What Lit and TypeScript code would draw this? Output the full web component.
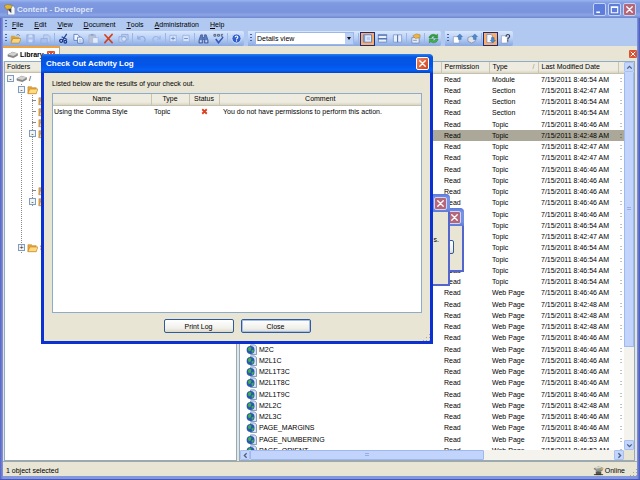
import { LitElement, html, svg, css, nothing, TemplateResult } from "lit";
import { customElement, property } from "lit/decorators.js";
import { classMap } from "lit/directives/class-map.js";

const shapes: Record<string, TemplateResult> = {
  app: svg`<path d="M5 2h5l2 2v8H4V5z" fill="#f4f6fa" stroke="#5a6c94" stroke-width=".7"/><path d="M0 2l4-1.500 5 1-1 3-5 1.500z" fill="#e9b62c" stroke="#7d6418" stroke-width=".5"/><path d="M4 6l4-1v5z" fill="#3c4454"/>`,
  open: svg`<path d="M1 3h4l1 1h4v6H1z" fill="#d9a43c"/><path d="M3 6h9l-2 5H1z" fill="#fbd477" stroke="#a8761c" stroke-width=".6"/><path d="M7 2.500c2-1.500 3-.5 3.500.5" fill="none" stroke="#4a5e8c" stroke-width=".8"/>`,
  save: svg`<path d="M2 2h8v8H2z" fill="#a9c0ec" stroke="#8ca6da" stroke-width=".8"/><path d="M4 2h4v3H4zM4 7h4v3H4z" fill="#cfdef8"/>`,
  saveAll: svg`<path d="M4 2h5l2 2v6H4z" fill="#bccff2" stroke="#94addf" stroke-width=".7"/><path d="M1 6h7v5H1z" fill="#a9c0ec" stroke="#8ca6da" stroke-width=".7"/>`,
  cut: svg`<path d="M9.500 1L5 8M4 4l6 3" stroke="#24438f" stroke-width="1.300"/><circle cx="3.500" cy="8.500" r="1.700" fill="none" stroke="#16358c" stroke-width="1.300"/><circle cx="8" cy="9.500" r="1.500" fill="none" stroke="#16358c" stroke-width="1.200"/>`,
  copy: svg`<path d="M1 1.500h4l2 2V8H1z" fill="#f2f7ff" stroke="#4468b4" stroke-width=".8"/><path d="M5 4.500h4l2 2V11H5z" fill="#f2f7ff" stroke="#4468b4" stroke-width=".8"/><path d="M6.500 7.500h3M6.500 9h3" stroke="#7593cf" stroke-width=".7"/>`,
  paste: svg`<path d="M1 2h7v9H1z" fill="#b9c3d8" stroke="#9aaccd" stroke-width=".7"/><path d="M3 1h3v2H3z" fill="#8fa3ca"/><path d="M5 5h6v6H5z" fill="#e2ebfb" stroke="#9db3dd" stroke-width=".7"/>`,
  remove: svg`<path d="M2 2l8 8.500M10 1.500L2 10.500" stroke="#d2401c" stroke-width="1.700" stroke-linecap="round"/>`,
  props: svg`<path d="M4 1.500h7v6H4z" fill="#b7cbef" stroke="#8ba4d6" stroke-width=".8"/><path d="M1 4h7v6H1z" fill="#bfd1f2" stroke="#8ba4d6" stroke-width=".8"/><circle cx="6.500" cy="6.500" r="2.500" fill="#d6e3fa" stroke="#8ba4d6" stroke-width=".8"/>`,
  undo: svg`<path d="M2 3v3.500h3.500M2.500 6c2-3 7-3 7.500 1 0 1-.5 2-1.500 2.500" fill="none" stroke="#8faae2" stroke-width="1.200"/>`,
  redo: svg`<path d="M10 3v3.500H6.500M9.500 6c-2-3-7-3-7.500 1 0 1 .5 2 1.500 2.500" fill="none" stroke="#9cb5e8" stroke-width="1.200"/>`,
  plus: svg`<path d="M2 2.500h7v7H2z" fill="#d5e3fb" stroke="#93abdc" stroke-width=".8"/><path d="M5.500 4v4M3.500 6h4" stroke="#6d8acb" stroke-width="1"/>`,
  minus: svg`<path d="M2 2.500h7v7H2z" fill="#d5e3fb" stroke="#93abdc" stroke-width=".8"/><path d="M3.500 6h4" stroke="#6d8acb" stroke-width="1"/>`,
  find: svg`<path d="M3 2h2v3h2V2h2l2 6v3H7V7H5v4H1V8z" fill="#5d7cc0" stroke="#2c4480" stroke-width=".6"/><path d="M2 8h2v2H2zM8 8h2v2H8z" fill="#cbdaf6"/>`,
  spell: svg`<path d="M1 1.500h2v2H1zM5 1.500h2v2H5zM11 1.500H9v2h2" fill="none" stroke="#34405c" stroke-width=".8"/><path d="M3 6.500l3 4 5-6" fill="none" stroke="#3158b4" stroke-width="1.700"/>`,
  help: svg`<circle cx="6" cy="6" r="5" fill="#2f5fcc" stroke="#dfe9fb" stroke-width="1"/><path d="M4.500 4.700c0-2 3-2 3 0 0 1-1.500 1-1.500 2.300M6 8v1.300" fill="none" stroke="#fff" stroke-width="1.200"/>`,
  viewA: svg`<path d="M1.500 2h9v8h-9z" fill="#e8f0fc" stroke="#4e70b6" stroke-width=".9"/><path d="M2 2h1.500v8H2z" fill="#7f9fdc"/><path d="M5 4h4v4H5z" fill="#b9cdf2"/>`,
  viewB: svg`<path d="M1.500 2h9v8h-9z" fill="#e8f0fc" stroke="#6684bf" stroke-width=".9"/><path d="M1 1.500h10V3H1zM1 5.500h10V7H1z" fill="#5474b4"/>`,
  viewC: svg`<path d="M1.500 2h9v8h-9z" fill="#e8f0fc" stroke="#7d97cb" stroke-width=".9"/><path d="M5.500 2h1.200v8H5.500z" fill="#5474b4"/>`,
  form: svg`<path d="M2 5h8v6H2z" fill="#e4ebf8" stroke="#6a7fae" stroke-width=".8"/><path d="M3 3l4-2 4 1v3L6 6z" fill="#edb544" stroke="#9c7426" stroke-width=".5"/><path d="M3.500 8h4" stroke="#6a7fae" stroke-width=".8"/>`,
  refresh: svg`<path d="M1 5.500C1.500 1 7 .5 9 2.500L10.500 1v4.500H6l1.500-1.500C6 3 4 3.500 3.500 5.500z" fill="#2fa336" stroke="#15701f" stroke-width=".4"/><path d="M11 6.500C10.500 11 5 11.500 3 9.500L1.500 11V6.500H6L4.500 8C6 9 8 8.500 8.500 6.500z" fill="#3db544" stroke="#15701f" stroke-width=".4"/>`,
  checkIn: svg`<path d="M1.500 4h5l1.500 1.500V11H1.500z" fill="#fff" stroke="#8695b4" stroke-width=".7"/><path d="M8.500 1l3 3H10v3H7V4H5.500z" fill="#4a8ad0" stroke="#28589c" stroke-width=".4"/>`,
  checkOut: svg`<path d="M1 5l4-1.500 4 2V9l-4 2-4-2z" fill="#dfe3ea" stroke="#78829a" stroke-width=".7"/><path d="M8.500 1l3 3H10v3H7V4H5.500z" fill="#4a8ad0" stroke="#28589c" stroke-width=".4"/>`,
  fetch: svg`<path d="M2 1.500h4.500L8 3v7.500H2z" fill="#f5f8ff" stroke="#6c84b8" stroke-width=".8"/><path d="M8.500 11l-3-3H7V5h3v3h1.500z" fill="#4a8ad0" stroke="#28589c" stroke-width=".4"/>`,
  what: svg`<path d="M1.500 3h5L8 4.500V11H1.500z" fill="#fff" stroke="#8695b4" stroke-width=".7"/><path d="M6.500 4c0-3 4-3 4-.5C10.500 5 8.500 5 8.500 7M8.500 8v1.300" fill="none" stroke="#333c50" stroke-width="1.200"/>`,
  drive: svg`<path d="M1 6l5-2.500L11.500 5v2L7 9.500 1 8z" fill="#8b8b8b" stroke="#555" stroke-width=".4"/><path d="M1 6l5-2.500L11.500 5 7 7.500z" fill="#d2d2d2"/>`,
  folder: svg`<path d="M1 3h4l1 1h4v6.500H1z" fill="#e7a93a" stroke="#c07a20" stroke-width=".6"/><path d="M3 5.500h9l-2 5H1z" fill="#ffdb80" stroke="#c07a20" stroke-width=".6"/>`,
  web: svg`<path d="M5 1h4.500l2 2v8.500H5z" fill="#d7e2f4" stroke="#5f7cae" stroke-width=".8"/><circle cx="5" cy="6.500" r="4.300" fill="#2757b0"/><path d="M2 5l2-2 2 1-1 3-2 1zM6 7l2-1 .5 2L6.500 10z" fill="#43b049"/>`,
  online: svg`<path d="M1 4l5-2 5 1.500-1 2.500-5 1z" fill="#9a9a94" stroke="#4e4e4a" stroke-width=".5"/><path d="M2 2.500l6-1 1 1.500-6 1z" fill="#d8d8d0"/><path d="M3 7h6v4H3z" fill="#55564e"/><path d="M1 10.500h10" stroke="#333" stroke-width="1"/><circle cx="10" cy="4" r="1" fill="#e6b93a"/>`,
  fail: svg`<path d="M3 3l6 6M9 3L3 9" stroke="#df3e1e" stroke-width="2.400"/>`,
  close: svg`<path d="M3 3l6 6M9 3L3 9" stroke="#fff" stroke-width="1.500" stroke-linecap="round"/>`,
  max: svg`<path d="M2.500 3h7v6.500h-7zM2.500 3.700h7" fill="none" stroke="#fff" stroke-width="1.200"/>`,
  min: svg`<path d="M2.500 9h4" stroke="#fff" stroke-width="1.800"/>`,
  up: svg`<path d="M3 7.500l3-3 3 3" fill="none" stroke="#4d6185" stroke-width="1.800"/>`,
  down: svg`<path d="M3 4.500l3 3 3-3" fill="none" stroke="#4d6185" stroke-width="1.800"/>`,
  left: svg`<path d="M7.500 3l-3 3 3 3" fill="none" stroke="#4d6185" stroke-width="1.800"/>`,
  right: svg`<path d="M4.500 3l3 3-3 3" fill="none" stroke="#4d6185" stroke-width="1.800"/>`,
};

@customElement("ui-icon")
class UiIcon extends LitElement {
  @property() name = "";
  static styles = css`
    :host { display: inline-flex; width: 11px; height: 11px; flex: none; }
    svg { width: 100%; height: 100%; display: block; }
  `;
  render() {
    return html`<svg viewBox="0 0 12 12" aria-hidden="true">${shapes[this.name] ?? nothing}</svg>`;
  }
}

interface Row { name: string; type: string; time: string; }

const names = ["M2C", "M2L1C", "M2L1T3C", "M2L1T8C", "M2L1T9C", "M2L2C", "M2L3C", "PAGE_MARGINS", "PAGE_NUMBERING", "PAGE_ORIENT"];
const times = [
  "46:54", "42:47", "46:54", "46:54", "46:46", "42:48", "42:47", "42:47", "46:46", "46:46", "46:46", "46:46",
  "46:46", "46:54", "42:47", "46:54", "46:54", "46:54", "46:54", "46:46", "42:48", "42:48", "42:48", "46:46",
  "46:46", "46:46", "46:46", "46:46", "46:46", "42:48", "46:46", "46:46", "46:53", "46:53",
];
const typeOf = (i: number) => (i === 0 ? "Module" : i < 4 ? "Section" : i < 19 ? "Topic" : "Web Page");
const rows: Row[] = times.map((time, i) => ({ name: names[i - 24] ?? "", type: typeOf(i), time }));
const selectedRow = 5;

const menus = ["File", "Edit", "View", "Document", "Tools", "Administration", "Help"];
const editTools = ["open", "save", "saveAll", "|", "cut", "copy", "paste", "remove", "props", "|", "undo", "redo", "|", "plus", "minus", "|", "find", "spell", "|", "help"];
const viewTools = ["|", "viewA*", "viewB", "viewC", "|", "form", "|", "refresh"];
const versionTools = ["checkIn", "checkOut", "|", "fetch*", "what"];

@customElement("app-root")
class AppRoot extends LitElement {
  static styles = css`
    :host {
      display: block; height: 100vh; position: relative; overflow: hidden;
      font: 7px/11px "Liberation Sans", Arial, sans-serif; color: #000;
    }
    * { box-sizing: border-box; }
    button { font: inherit; color: inherit; padding: 0; margin: 0; border: 0; background: none; display: inline-flex; align-items: center; justify-content: center; }
    .window { height: 100%; display: flex; flex-direction: column; padding: 0 3px 3px; background: linear-gradient(90deg, #5563c6, #8497dc 3px, #8497dc calc(100% - 3px), #4454bd); border-bottom: 1px solid #4557b8; }
    .title { flex: none; height: 18px; margin: 0 -3px; padding: 0 4px; display: flex; align-items: center; gap: 2px; background: linear-gradient(#9ab5ee, #7f9ae2 3px, #7b93da 12px, #8aa6e8 15px, #6f86cc); color: #dde7fb; font-weight: bold; font-size: 8px; }
    .title h1 { font: inherit; margin: 0; flex: 1; }
    .sys { width: 13px; height: 13px; border: 1px solid #c3d2f5; border-radius: 2px; background: #5c7ddc; }
    .sys.close { background: #b56678; }
    .bars { flex: none; background: #b1c9f1; }
    .menu { height: 13px; display: flex; align-items: center; gap: 11px; padding-left: 2px; }
    .grip { width: 2px; height: 9px; flex: none; margin-right: 1px; background: repeating-linear-gradient(#4666ac 0 1px, transparent 1px 3px); }
    .menu .grip { margin-right: -6px; }
    .menu button { height: 13px; }
    .u { text-decoration: underline; }
    .tools { height: 15px; display: flex; gap: 4px; }
    .band { height: 15px; display: flex; align-items: center; padding: 0 0 0 2px; background: linear-gradient(#d9e7fd, #b7cef5 50%, #89a8e0); border-radius: 0 2px 2px 0; }
    .tool { width: 15px; height: 14px; flex: none; }
    .tool.small { width: 13px; }
    .tool.on { background: #fcae68; border: 1px solid #1c2c78; }
    .sep { width: 3px; height: 11px; flex: none; display: flex; justify-content: center; }
    .sep::before { content: ""; width: 1px; background: #9db5e4; }
    .combo { position: relative; display: flex; margin: 0 3px 0 2px; }
    select { appearance: none; width: 99px; height: 13px; border: 1px solid #9db8e8; border-radius: 0; background: #fff; font: inherit; color: inherit; padding: 0 1px; }
    .arrow { position: absolute; right: 1px; top: 1px; width: 8px; height: 11px; background: #b9cff5; display: flex; align-items: center; justify-content: center; pointer-events: none; }
    .arrow::before { content: ""; border: 2px solid transparent; border-top: 3px solid #111; border-bottom: 0; }
    .work { flex: 1; min-height: 0; display: flex; flex-direction: column; background: #e8e5d5; }
    .tabs { height: 15px; flex: none; display: flex; align-items: center; justify-content: space-between; }
    .tab { height: 15px; width: 57px; display: flex; align-items: center; gap: 2px; padding: 0 4px; background: #fff; border-top: 2px solid #f0a23c; border-right: 1px solid #aaa795; font-weight: bold; }
    .tab span { flex: 1; }
    .x { width: 8px; height: 8px; background: #dc5230; border-radius: 1px; }
    .x ui-icon { width: 8px; height: 8px; }
    .panes { flex: 1; min-height: 0; display: grid; grid-template-columns: 233px minmax(0, 1fr); gap: 2px; padding: 0 2px 0 1px; }
    .pane { background: #fff; border: 1px solid #8fabca; min-height: 0; display: flex; flex-direction: column; overflow: hidden; }
    .head, th { height: 11px; background: linear-gradient(#eeece0 8px, #d9d5c4); border-bottom: 1px solid #c5c1ae; font-weight: normal; text-align: left; line-height: 10px; white-space: nowrap; }
    .head { flex: none; padding: 0 2px; }
    ul { list-style: none; margin: 0; padding: 0; }
    .tree { padding: 0 2px; }
    .tree ul { margin-left: 3px; padding-left: 8px; background: linear-gradient(#8a8a8a 1px, transparent 1px) 11px 0 / 1px 2px repeat-y; }
    .node { height: 11px; display: flex; align-items: center; gap: 2px; }
    .exp { width: 7px; height: 7px; flex: none; border: 1px solid #7b9cc4; background: #f4f4ee; color: #222; display: flex; align-items: center; justify-content: center; font-size: 7px; line-height: 5px; }
    .stem { width: 4px; height: 1px; flex: none; margin-left: 3px; background: #888; }
    .fold { height: 46px; }
    .fold.short { height: 35px; }
    .list { flex: 1; min-height: 0; display: grid; grid-template-columns: minmax(0, 1fr) 10px; grid-template-rows: minmax(0, 1fr) 10px; }
    .scroller { overflow: hidden; }
    table { border-collapse: collapse; table-layout: fixed; width: 100%; }
    th, td { padding: 0 3px; overflow: hidden; white-space: nowrap; }
    th + th { border-left: 1px solid #c9c5b3; }
    .files td { height: 11px; line-height: 11px; }
    .files tr:nth-child(4n) td { height: 12px; }
    .files .on td { background: #aca899; }
    .files .cut { padding: 0 2px; }
    .c-name { width: 201px; }
    .c-perm { width: 48px; }
    .c-type { width: 49px; }
    .c-date { width: 80px; }
    .file { display: flex; align-items: center; gap: 2px; margin-left: 4px; height: 11px; }
    .sorted { float: right; color: #999585; }
    .bar { background: #f4f3ee; display: flex; }
    .bar.v { flex-direction: column; }
    .bar button { width: 10px; height: 10px; flex: none; border: 1px solid #a9c0f0; border-radius: 1px; background: #c4d5fb; }
    .bar button ui-icon { width: 9px; height: 9px; }
    .thumb { border: 1px solid #9fb8ee; border-radius: 1px; background: #c2d3fc; display: flex; align-items: center; justify-content: center; }
    .v .thumb { flex: 275; border-width: 0 1px 1px; }
    .v .rest { flex: 93; }
    .h .thumb { flex: 234; }
    .h .rest { flex: 131; }
    .thumb::before { content: ""; width: 4px; height: 4px; background: repeating-linear-gradient(#93aee8 0 1px, transparent 1px 2px); }
    .corner { background: #e8e5d5; }
    .status { flex: none; height: 15px; border-top: 1px solid #aaa795; background: #e8e5d5; display: flex; align-items: center; padding: 2px 0 0 3px; }
    .status .msg { flex: 1; }
    .online { display: flex; align-items: center; gap: 1px; margin-right: 4px; }
    .sizer { width: 8px; height: 8px; align-self: flex-end; background: radial-gradient(circle, #a9a593 1px, transparent 1px) 0 0 / 3px 3px; clip-path: polygon(100% 0, 100% 100%, 0 100%); }
    .dialog { position: absolute; display: flex; flex-direction: column; background: #e8e5d5; border: 3px solid #0c31d2; border-top: 0; border-radius: 5px 5px 0 0; }
    .dialog header { flex: none; margin: 0 -3px; height: 19px; padding: 0 4px 0 5px; border-radius: 4px 4px 0 0; background: linear-gradient(#2b80f4, #0654e0 3px, #0356ea 12px, #0562f8 16px, #0444c4); color: #fff; display: flex; align-items: center; justify-content: space-between; }
    .dialog h2 { margin: 0; font: bold 8px/12px "Liberation Sans", Arial, sans-serif; }
    .dialog .shut { width: 13px; height: 13px; border: 1px solid #fff; border-radius: 2px; background: linear-gradient(135deg, #ee8460, #d24218); }
    .idle { border: 2px solid #5266ce; border-top: 0; }
    .idle header { margin: 0 -2px; height: 18px; padding: 0 3px; background: linear-gradient(#5b78dc, #7693e6 4px, #7390e2 14px, #5f79d4); justify-content: flex-end; }
    .dialog.idle .shut { background: #b56678; border-color: #cdd6f2; }
    .log { left: 41px; top: 54px; width: 392px; height: 290px; }
    .second { left: 300px; top: 194px; width: 150px; height: 92px; }
    .third { left: 330px; top: 208px; width: 134px; height: 64px; }
    .second p { margin: 22px 9px 0 0; text-align: right; }
    .third .btn { align-self: flex-end; margin: 14px 8px 0 0; width: 60px; }
    .inner { flex: 1; min-height: 0; display: flex; flex-direction: column; padding: 5px 8px 0; }
    .inner p { margin: 0 0 4px; }
    .results { flex: 1; min-height: 0; background: #fff; border: 1px solid #8fabca; }
    .results th { text-align: center; }
    .results td { height: 11px; line-height: 11px; }
    .results td:first-child { padding: 0 1px; }
    .results ui-icon { width: 9px; height: 9px; display: block; margin: 0 auto; }
    .d-name { width: 98px; }
    .d-type { width: 38px; }
    .d-stat { width: 30px; }
    .results .note { padding-left: 4px; }
    .actions { flex: none; display: flex; justify-content: center; gap: 7px; padding: 6px 0 8px; }
    .btn { width: 70px; height: 14px; border: 1px solid #2f5c98; border-radius: 2px; background: linear-gradient(#fff, #f0efe9 70%, #dcd8cb); }
    .btn.default { box-shadow: inset 0 0 0 1px #a5c0ee; }
    .log .sizer { position: absolute; right: 0; bottom: 0; }
  `;

  private tool(t: string) {
    if (t === "|") return html`<span class="sep"></span>`;
    const name = t.replace("*", "");
    const cls = classMap({ tool: true, on: t.endsWith("*"), small: name === "plus" || name === "minus" });
    return html`<button class=${cls} aria-label=${name}><ui-icon name=${name}></ui-icon></button>`;
  }

  private folder(exp: string, label = "") {
    return html`<div class="node"><span class=${exp ? "exp" : "stem"}>${exp}</span><ui-icon name="folder"></ui-icon>${label}</div>`;
  }

  render() {
    return html`
      <div class="window">
        <header class="title">
          <ui-icon name="app"></ui-icon><h1>Content - Developer</h1>
          <button class="sys" aria-label="Minimize"><ui-icon name="min"></ui-icon></button>
          <button class="sys" aria-label="Maximize"><ui-icon name="max"></ui-icon></button>
          <button class="sys close" aria-label="Close window"><ui-icon name="close"></ui-icon></button>
        </header>
        <div class="bars">
          <nav class="menu"><span class="grip"></span>
            ${menus.map((m) => html`<button><span class="u">${m[0]}</span>${m.slice(1)}</button>`)}
          </nav>
          <div class="tools">
            <div class="band"><span class="grip"></span>${editTools.map((t) => this.tool(t))}</div>
            <div class="band"><span class="grip"></span>
              <div class="combo"><select aria-label="View"><option>Details view</option></select><span class="arrow"></span></div>
              ${viewTools.map((t) => this.tool(t))}
            </div>
            <div class="band"><span class="grip"></span>${versionTools.map((t) => this.tool(t))}</div>
          </div>
        </div>
        <main class="work">
          <div class="tabs">
            <div class="tab"><ui-icon name="drive"></ui-icon><span>Library</span><button class="x" aria-label="Close Library"><ui-icon name="close"></ui-icon></button></div>
            <button class="x" aria-label="Close tab"><ui-icon name="close"></ui-icon></button>
          </div>
          <div class="panes">
            <section class="pane">
              <div class="head">Folders</div>
              <div class="tree">
                <div class="node"><span class="exp">-</span><ui-icon name="drive"></ui-icon>/</div>
                <ul>
                  <li>${this.folder("-")}
                    <ul>
                      <li>${this.folder("")}</li><li>${this.folder("")}</li><li>${this.folder("")}</li>
                      <li>${this.folder("-")}</li><li class="fold"></li>
                      <li>${this.folder("")}</li><li>${this.folder("-")}</li>
                    </ul>
                  </li>
                  <li class="fold short"></li>
                  <li>${this.folder("+", "S")}</li>
                </ul>
              </div>
            </section>
            <section class="pane">
              <div class="list">
                <div class="scroller">
                  <table class="files">
                    <colgroup><col class="c-name"><col class="c-perm"><col class="c-type"><col class="c-date"><col></colgroup>
                    <thead><tr><th></th><th>Permission</th><th>Type<span class="sorted">/</span></th><th>Last Modified Date</th><th></th></tr></thead>
                    <tbody>
                      ${rows.map((r, i) => html`<tr class=${classMap({ on: i === selectedRow })}>
                        <td class="cut"><div class="file"><ui-icon name="web"></ui-icon>${r.name}</div></td>
                        <td>Read</td><td>${r.type}</td><td>7/15/2011 8:${r.time} AM</td><td class="cut">:</td></tr>`)}
                    </tbody>
                  </table>
                </div>
                <div class="bar v"><button aria-label="Scroll up"><ui-icon name="up"></ui-icon></button><div class="thumb"></div><div class="rest"></div><button aria-label="Scroll down"><ui-icon name="down"></ui-icon></button></div>
                <div class="bar h"><button aria-label="Scroll left"><ui-icon name="left"></ui-icon></button><div class="thumb"></div><div class="rest"></div><button aria-label="Scroll right"><ui-icon name="right"></ui-icon></button></div>
                <div class="corner"></div>
              </div>
            </section>
          </div>
        </main>
        <footer class="status"><span class="msg">1 object selected</span><span class="online"><ui-icon name="online"></ui-icon>Online</span><span class="sizer"></span></footer>
      </div>

      <section class="dialog idle third"><header><button class="shut" aria-label="Close"><ui-icon name="close"></ui-icon></button></header><button class="btn" aria-label="Cancel"></button></section>
      <section class="dialog idle second"><header><button class="shut" aria-label="Close"><ui-icon name="close"></ui-icon></button></header><p>s.</p></section>
      <section class="dialog log" role="dialog" aria-labelledby="log-title">
        <header><h2 id="log-title">Check Out Activity Log</h2><button class="shut" aria-label="Close dialog"><ui-icon name="close"></ui-icon></button></header>
        <div class="inner">
          <p>Listed below are the results of your check out.</p>
          <div class="results">
            <table>
              <colgroup><col class="d-name"><col class="d-type"><col class="d-stat"><col></colgroup>
              <thead><tr><th>Name</th><th>Type</th><th>Status</th><th>Comment</th></tr></thead>
              <tbody><tr><td>Using the Comma Style</td><td>Topic</td><td><ui-icon name="fail"></ui-icon></td><td class="note">You do not have permissions to perform this action.</td></tr></tbody>
            </table>
          </div>
          <div class="actions"><button class="btn">Print Log</button><button class="btn default">Close</button></div>
        </div>
        <span class="sizer"></span>
      </section>
    `;
  }
}
